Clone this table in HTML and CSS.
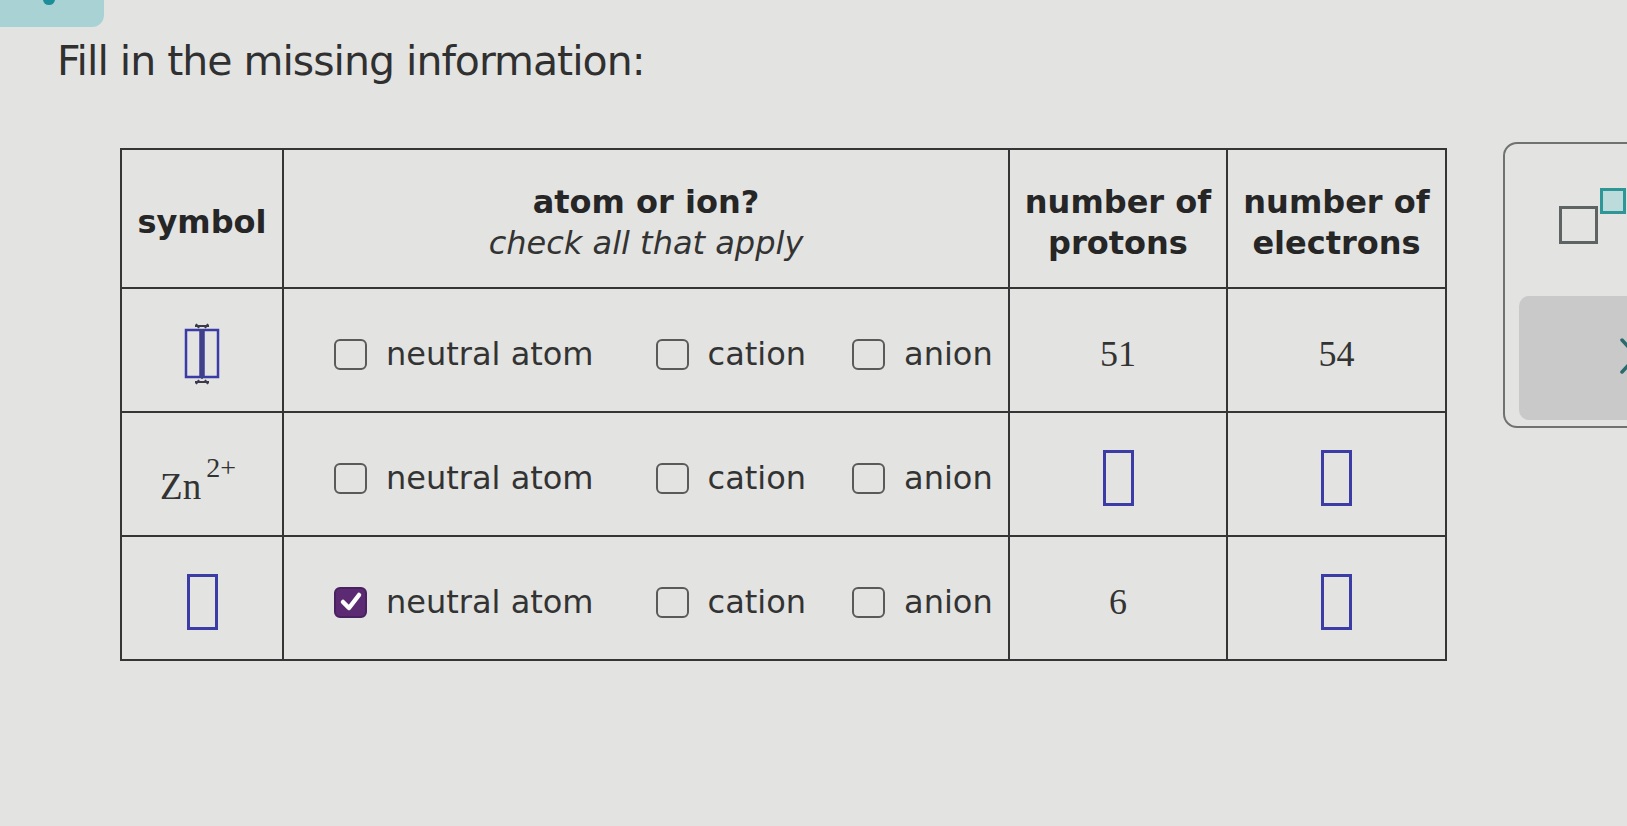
FILE: index.html
```html
<!DOCTYPE html>
<html>
<head>
<meta charset="utf-8">
<link rel="stylesheet" href="styles.css">
</head>
<body>
<div class="topbar"><div class="tab"><span class="tabdot"></span></div></div>
<h1 class="title">Fill in the missing information:</h1>
<div class="main">
  <table class="grid">
    <colgroup>
      <col class="c-sym"><col class="c-kind"><col class="c-p"><col class="c-e">
    </colgroup>
    <tr class="head">
      <th>symbol</th>
      <th><div>atom or ion?</div><div class="sub">check all that apply</div></th>
      <th><div>number of</div><div>protons</div></th>
      <th><div>number of</div><div>electrons</div></th>
    </tr>
    <tr class="row">
      <td class="sym">
        <svg class="supsub" width="36" height="62" viewBox="0 0 36 62">
          <path d="M11 3 L25 3 M12 1 L15 5 M24 1 L21 5" stroke="#3a3a4a" stroke-width="2" fill="none"/>
          <rect x="2" y="7" width="14.5" height="47" fill="none" stroke="#3b3ba8" stroke-width="2.5"/>
          <rect x="19.5" y="7" width="14.5" height="47" fill="none" stroke="#3b3ba8" stroke-width="2.5"/>
          <path d="M18 6 L18 56" stroke="#3a3a50" stroke-width="1.5"/>
          <path d="M11 59 L25 59 M12 61 L15 57 M24 61 L21 57" stroke="#3a3a4a" stroke-width="2" fill="none"/>
        </svg>
      </td>
      <td class="kind">
        <div class="opts">
          <label class="opt"><span class="cb"></span>neutral atom</label>
          <label class="opt o2"><span class="cb"></span>cation</label>
          <label class="opt o3"><span class="cb"></span>anion</label>
        </div>
      </td>
      <td class="num">51</td>
      <td class="num">54</td>
    </tr>
    <tr class="row">
      <td class="sym"><span class="zn">Zn<sup>2+</sup></span></td>
      <td class="kind">
        <div class="opts">
          <label class="opt"><span class="cb"></span>neutral atom</label>
          <label class="opt o2"><span class="cb"></span>cation</label>
          <label class="opt o3"><span class="cb"></span>anion</label>
        </div>
      </td>
      <td class="num"><span class="box"></span></td>
      <td class="num"><span class="box"></span></td>
    </tr>
    <tr class="row">
      <td class="sym"><span class="box"></span></td>
      <td class="kind">
        <div class="opts">
          <label class="opt"><span class="cb on"><svg width="26" height="24" viewBox="0 0 26 24"><path d="M5 12 L11 18 L21 5" stroke="#fff" stroke-width="4.5" fill="none" stroke-linecap="round" stroke-linejoin="round"/></svg></span>neutral atom</label>
          <label class="opt o2"><span class="cb"></span>cation</label>
          <label class="opt o3"><span class="cb"></span>anion</label>
        </div>
      </td>
      <td class="num">6</td>
      <td class="num"><span class="box"></span></td>
    </tr>
  </table>
  <div class="panel">
    <div class="tool">
      <span class="base"></span><span class="sup"></span>
    </div>
    <div class="btn">
      <svg class="chev" width="24" height="40" viewBox="0 0 24 40"><path d="M4 4 L19 20 L4 36" stroke="#2c6a70" stroke-width="3.5" fill="none" stroke-linecap="round" stroke-linejoin="round"/></svg>
    </div>
  </div>
</div>
</body>
</html>
```
FILE: styles.css
```css
html, body {
  margin: 0;
  padding: 0;
  background: #e3e3e1;
  overflow: hidden;
  width: 1627px;
  height: 826px;
}
body {
  font-family: "DejaVu Sans", Verdana, sans-serif;
  color: #2e2e2e;
}
.topbar {
  height: 27px;
}
.tab {
  width: 104px;
  height: 27px;
  background: #a9d2d4;
  border-bottom-right-radius: 12px;
  position: relative;
}
.tabdot {
  position: absolute;
  left: 43px;
  top: -6px;
  width: 12px;
  height: 11px;
  border-radius: 50%;
  background: #1c8e98;
}
.title {
  margin: 11px 0 0 57px;
  font-size: 41px;
  font-weight: normal;
  line-height: 46px;
  color: #303030;
  letter-spacing: -1px;
}
.main {
  display: flex;
  align-items: flex-start;
  margin-top: 64px;
  padding-left: 120px;
}
.grid {
  border-collapse: collapse;
  table-layout: fixed;
  width: 1325px;
  font-size: 32px;
}
.c-sym { width: 162px; }
.c-kind { width: 726px; }
.c-p { width: 218px; }
.c-e { width: 219px; }
.grid th, .grid td {
  border: 2px solid #353535;
  padding: 8px 0 0 0;
  text-align: center;
  vertical-align: middle;
}
.head {
  height: 139px;
}
.head th {
  font-weight: bold;
  line-height: 41px;
  color: #262626;
}
.head .sub {
  font-weight: normal;
  font-style: italic;
  color: #333;
}
.row {
  height: 124px;
}
.sym svg {
  display: block;
  margin: 0 auto;
}
.zn {
  font-family: "Liberation Serif", "Times New Roman", serif;
  font-size: 37px;
  color: #333;
  position: relative;
  left: -4px;
  top: 6px;
}
.zn sup {
  font-size: 28px;
  position: relative;
  top: -8px;
  margin-left: 5px;
}
.kind {
  text-align: left;
}
.opts {
  display: flex;
  align-items: center;
  padding-left: 50px;
  color: #333;
}
.opt {
  display: flex;
  align-items: center;
  gap: 19px;
  white-space: nowrap;
}
.o2 { margin-left: 62px; }
.o3 { margin-left: 46px; }
.cb {
  width: 29px;
  height: 27px;
  border: 2.5px solid #5a5a5a;
  border-radius: 6px;
  box-sizing: content-box;
  display: inline-flex;
  align-items: center;
  justify-content: center;
}
.cb.on {
  background: #5b2a72;
  border-color: #4a2160;
}
.num {
  font-family: "Liberation Serif", "Times New Roman", serif;
  font-size: 36px;
  color: #333;
}
.box {
  display: inline-block;
  width: 25px;
  height: 50px;
  border: 3px solid #3c3ca6;
  vertical-align: middle;
}
.panel {
  margin-left: 56px;
  margin-top: -6px;
  width: 170px;
  height: 286px;
  border: 2.5px solid #707272;
  border-radius: 14px;
  box-sizing: border-box;
  flex-shrink: 0;
  padding: 44px 0 0 14px;
}
.tool {
  position: relative;
  height: 56px;
  margin-left: 40px;
}
.tool .base {
  position: absolute;
  left: 0;
  top: 18px;
  width: 33px;
  height: 32px;
  border: 3px solid #5e6464;
}
.tool .sup {
  position: absolute;
  left: 41px;
  top: 0;
  width: 20px;
  height: 20px;
  border: 3px solid #2f9698;
  background: #bcdcdc;
}
.btn {
  margin-top: 52px;
  height: 124px;
  background: #c8c9c8;
  border-radius: 10px;
  position: relative;
}
.chev {
  position: absolute;
  left: 99px;
  top: 40px;
}
```
